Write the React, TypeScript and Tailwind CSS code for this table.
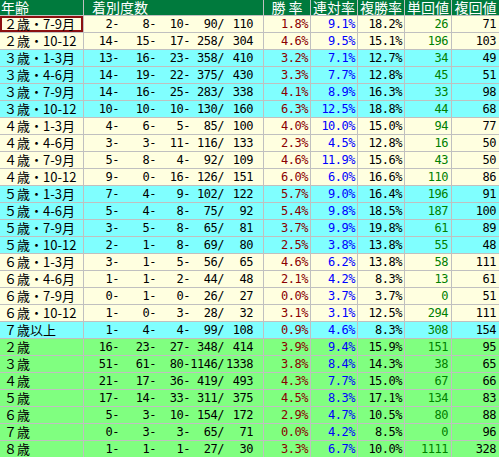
import React from 'react';

type Row = {
  label: string;
  counts: [number, number, number, number, number];
  win: string;
  place: string;
  show: string;
  winRet: number;
  showRet: number;
  tone: 'cream' | 'cyan' | 'green';
};

const rows: Row[] = [
  { label: '２歳・7-9月', counts: [2, 8, 10, 90, 110], win: '1.8%', place: '9.1%', show: '18.2%', winRet: 26, showRet: 71, tone: 'cream' },
  { label: '２歳・10-12', counts: [14, 15, 17, 258, 304], win: '4.6%', place: '9.5%', show: '15.1%', winRet: 196, showRet: 103, tone: 'cream' },
  { label: '３歳・1-3月', counts: [13, 16, 23, 358, 410], win: '3.2%', place: '7.1%', show: '12.7%', winRet: 34, showRet: 49, tone: 'cyan' },
  { label: '３歳・4-6月', counts: [14, 19, 22, 375, 430], win: '3.3%', place: '7.7%', show: '12.8%', winRet: 45, showRet: 51, tone: 'cyan' },
  { label: '３歳・7-9月', counts: [14, 16, 25, 283, 338], win: '4.1%', place: '8.9%', show: '16.3%', winRet: 33, showRet: 98, tone: 'cyan' },
  { label: '３歳・10-12', counts: [10, 10, 10, 130, 160], win: '6.3%', place: '12.5%', show: '18.8%', winRet: 44, showRet: 68, tone: 'cyan' },
  { label: '４歳・1-3月', counts: [4, 6, 5, 85, 100], win: '4.0%', place: '10.0%', show: '15.0%', winRet: 94, showRet: 77, tone: 'cream' },
  { label: '４歳・4-6月', counts: [3, 3, 11, 116, 133], win: '2.3%', place: '4.5%', show: '12.8%', winRet: 16, showRet: 50, tone: 'cream' },
  { label: '４歳・7-9月', counts: [5, 8, 4, 92, 109], win: '4.6%', place: '11.9%', show: '15.6%', winRet: 43, showRet: 50, tone: 'cream' },
  { label: '４歳・10-12', counts: [9, 0, 16, 126, 151], win: '6.0%', place: '6.0%', show: '16.6%', winRet: 110, showRet: 86, tone: 'cream' },
  { label: '５歳・1-3月', counts: [7, 4, 9, 102, 122], win: '5.7%', place: '9.0%', show: '16.4%', winRet: 196, showRet: 91, tone: 'cyan' },
  { label: '５歳・4-6月', counts: [5, 4, 8, 75, 92], win: '5.4%', place: '9.8%', show: '18.5%', winRet: 187, showRet: 100, tone: 'cyan' },
  { label: '５歳・7-9月', counts: [3, 5, 8, 65, 81], win: '3.7%', place: '9.9%', show: '19.8%', winRet: 61, showRet: 89, tone: 'cyan' },
  { label: '５歳・10-12', counts: [2, 1, 8, 69, 80], win: '2.5%', place: '3.8%', show: '13.8%', winRet: 55, showRet: 48, tone: 'cyan' },
  { label: '６歳・1-3月', counts: [3, 1, 5, 56, 65], win: '4.6%', place: '6.2%', show: '13.8%', winRet: 58, showRet: 111, tone: 'cream' },
  { label: '６歳・4-6月', counts: [1, 1, 2, 44, 48], win: '2.1%', place: '4.2%', show: '8.3%', winRet: 13, showRet: 61, tone: 'cream' },
  { label: '６歳・7-9月', counts: [0, 1, 0, 26, 27], win: '0.0%', place: '3.7%', show: '3.7%', winRet: 0, showRet: 51, tone: 'cream' },
  { label: '６歳・10-12', counts: [1, 0, 3, 28, 32], win: '3.1%', place: '3.1%', show: '12.5%', winRet: 294, showRet: 111, tone: 'cream' },
  { label: '７歳以上', counts: [1, 4, 4, 99, 108], win: '0.9%', place: '4.6%', show: '8.3%', winRet: 308, showRet: 154, tone: 'cyan' },
  { label: '２歳', counts: [16, 23, 27, 348, 414], win: '3.9%', place: '9.4%', show: '15.9%', winRet: 151, showRet: 95, tone: 'green' },
  { label: '３歳', counts: [51, 61, 80, 1146, 1338], win: '3.8%', place: '8.4%', show: '14.3%', winRet: 38, showRet: 65, tone: 'green' },
  { label: '４歳', counts: [21, 17, 36, 419, 493], win: '4.3%', place: '7.7%', show: '15.0%', winRet: 67, showRet: 66, tone: 'green' },
  { label: '５歳', counts: [17, 14, 33, 311, 375], win: '4.5%', place: '8.3%', show: '17.1%', winRet: 134, showRet: 83, tone: 'green' },
  { label: '６歳', counts: [5, 3, 10, 154, 172], win: '2.9%', place: '4.7%', show: '10.5%', winRet: 80, showRet: 88, tone: 'green' },
  { label: '７歳', counts: [0, 3, 3, 65, 71], win: '0.0%', place: '4.2%', show: '8.5%', winRet: 0, showRet: 96, tone: 'green' },
  { label: '８歳', counts: [1, 1, 1, 27, 30], win: '3.3%', place: '6.7%', show: '10.0%', winRet: 1111, showRet: 328, tone: 'green' },
];

const toneBg = {
  cream: 'bg-[#ffffe0]',
  cyan: 'bg-[#80ffff]',
  green: 'bg-[#80ff80]',
};

const num = "font-['DejaVu_Sans_Mono','Noto_Sans_CJK_JP',monospace] text-[12px] tracking-[-0.5px]";
const head = 'h-[15px] bg-[#007a3d] text-white text-[14px] leading-[15px] whitespace-nowrap';

export default function App() {
  return (
    <div className="w-[499px] h-[457px] overflow-hidden bg-[#c0c0c0] font-['Noto_Sans_CJK_JP',sans-serif]">
      <div className="grid grid-cols-[83px_179px_46px_46px_46px_46px_47px] gap-px text-black">
        {/* header */}
        <div className={`${head} pl-px`}>年齢</div>
        <div className={`${head} pl-[8px]`}>着別度数</div>
        <div className={`${head} text-center tracking-[3px] pl-[3px]`}>勝率</div>
        <div className={`${head} text-center`}>連対率</div>
        <div className={`${head} text-center`}>複勝率</div>
        <div className={`${head} text-center`}>単回値</div>
        <div className={`${head} text-center`}>複回値</div>

        {rows.map((r, i) => {
          const bg = toneBg[r.tone];
          return (
            <React.Fragment key={i}>
              <div
                className={`h-[16px] ${bg} text-[13px] leading-[16px] pl-[4px] whitespace-nowrap ${
                  i === 0 ? 'shadow-[inset_0_0_0_2px_#8b1010]' : ''
                }`}
              >
                {r.label}
              </div>
              <div className={`h-[16px] ${bg} ${num} leading-[16px] grid grid-cols-[35px_37px_34px_34px_29px] whitespace-nowrap`}>
                <span className="text-right">{r.counts[0]}-</span>
                <span className="text-right">{r.counts[1]}-</span>
                <span className="text-right">{r.counts[2]}-</span>
                <span className="text-right">{r.counts[3]}/</span>
                <span className="text-right">{r.counts[4]}</span>
              </div>
              <div className={`h-[16px] ${bg} ${num} leading-[16px] text-right pr-[2px] text-[#8b0000]`}>{r.win}</div>
              <div className={`h-[16px] ${bg} ${num} leading-[16px] text-right pr-[2px] text-[#0000ff]`}>{r.place}</div>
              <div className={`h-[16px] ${bg} ${num} leading-[16px] text-right pr-[2px]`}>{r.show}</div>
              <div className={`h-[16px] ${bg} ${num} leading-[16px] text-right pr-[3px] text-[#008000]`}>{r.winRet}</div>
              <div className={`h-[16px] ${bg} ${num} leading-[16px] text-right pr-[3px]`}>{r.showRet}</div>
            </React.Fragment>
          );
        })}
      </div>
    </div>
  );
}
